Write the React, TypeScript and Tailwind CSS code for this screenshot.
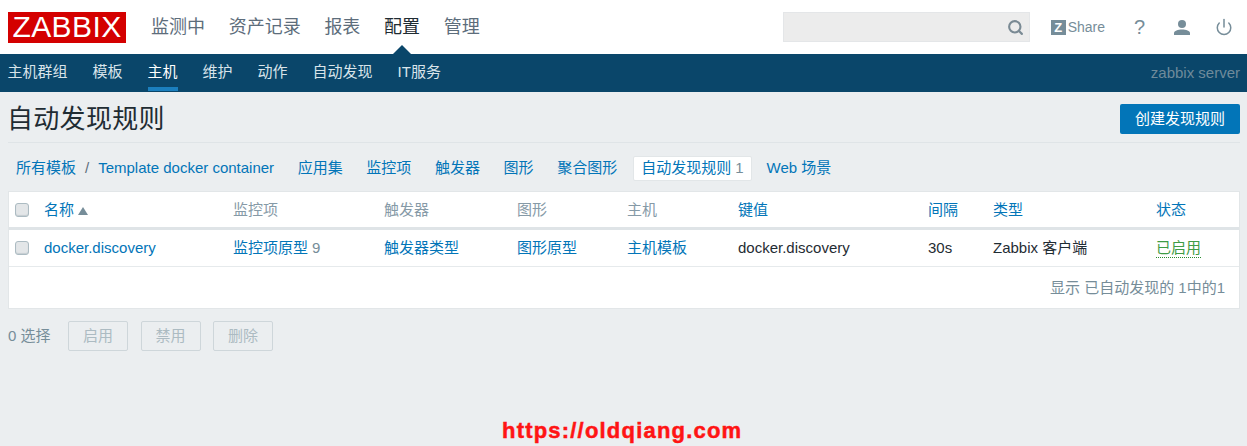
import React from "react";
import { Search, Power } from "lucide-react";

const FONT = "font-['Liberation_Sans','Noto_Sans_CJK_SC',sans-serif]";

const topMenu = ["监测中", "资产记录", "报表", "配置", "管理"];
const subMenu = ["主机群组", "模板", "主机", "维护", "动作", "自动发现", "IT服务"];
const tabs = ["应用集", "监控项", "触发器", "图形", "聚合图形"];
const COLS = "grid-cols-[29px_189px_151px_133px_110px_111px_190px_65px_163px_84px]";

const Checkbox = () => (
  <span className="block h-[14px] w-[14px] rounded-[3px] border border-[#acbbc2] bg-[#e3e6e8] shadow-[inset_0_-1px_1px_#c5cdd1]" />
);

const Header = () => (
  <header className="flex h-[54px] items-center bg-white pl-2 pr-[14px]">
    <div className="flex h-[31px] w-[118px] items-center justify-center bg-[#d40000] text-[30px] leading-none tracking-[0.4px] text-white">
      ZABBIX
    </div>
    <nav className="ml-[25px] flex gap-[23.7px] text-[18px] text-[#5d6d7b]">
      {topMenu.map((m) => (
        <a key={m} className={m === "配置" ? "relative text-[#1f2c33]" : ""}>
          {m}
          {m === "配置" && (
            <span className="absolute left-1/2 top-[31px] h-0 w-0 -translate-x-1/2 border-x-[10px] border-b-[10px] border-x-transparent border-b-[#0a466a]" />
          )}
        </a>
      ))}
    </nav>
    <div className="ml-auto flex items-center">
      <div className="flex h-[30px] w-[247px] items-center justify-end border border-[#e4e6e8] bg-[#ececec] pr-[5px]">
        <Search size={17} strokeWidth={3} className="text-[#7a8a94]" />
      </div>
      <div className="ml-[21px] flex items-center text-[14px] text-[#768d99]">
        <span className="mr-[2px] flex h-[15px] w-[15px] items-center justify-center bg-[#768d99] text-[13px] font-bold leading-none text-white">
          Z
        </span>
        Share
      </div>
      <span className="ml-[28px] w-[13px] text-center text-[20px] leading-none text-[#768d99]">?</span>
      <svg viewBox="0 0 16 15" className="ml-[28px] h-[15px] w-[16px] fill-[#768d99]">
        <circle cx="8" cy="4" r="4" />
        <path d="M0 15v-2c0-2 4-3.5 8-3.5s8 1.5 8 3.5v2z" />
      </svg>
      <Power size={18} strokeWidth={2} className="ml-[25px] text-[#768d99]" />
    </div>
  </header>
);

const SubNav = () => (
  <nav className="flex h-[38px] items-start bg-[#0a466a] pl-[7.5px] pr-[7px] text-[15px] text-[#d9e4ea]">
    <div className="flex gap-[25px]">
      {subMenu.map((m) => (
        <a
          key={m}
          className={
            m === "主机"
              ? "flex h-[37px] items-center border-b-[4px] border-[#1b7fbe] pt-[4px] text-white"
              : "flex h-[37px] items-center border-b-[4px] border-transparent pt-[4px]"
          }
        >
          {m}
        </a>
      ))}
    </div>
    <span className="ml-auto self-center text-[15px] text-[#6f8b9b]">zabbix server</span>
  </nav>
);

const TitleBar = () => (
  <div className="ml-2 mr-[7px] flex h-[51px] items-center justify-between border-b border-[#dfe4e7] pt-[4px]">
    <h1 className="-ml-[1px] mt-[1px] text-[26px] tracking-[0.3px] text-[#1f2c33]">自动发现规则</h1>
    <button className="h-[30px] w-[120px] rounded-[2px] bg-[#0275b8] text-[15px] text-white">创建发现规则</button>
  </div>
);

const Tabs = () => (
  <div className="flex h-[48px] items-center pl-4 pt-[2px] text-[15px] text-[#0275b8]">
    <a>所有模板</a>
    <span className="ml-[9px] mr-[9px] text-[#5d6d7b]">/</span>
    <a>Template docker container</a>
    <div className="ml-[23.6px] flex items-center gap-[23.6px]">
      {tabs.map((t) => (
        <a key={t}>{t}</a>
      ))}
    </div>
    <span className="ml-[16px] flex h-[25px] items-center rounded-[2px] border border-[#e2e6e8] bg-white px-[7px]">
      自动发现规则<span className="ml-[4px] text-[#768d99]">1</span>
    </span>
    <a className="ml-[15px]">Web 场景</a>
  </div>
);

const Table = () => (
  <section className="ml-2 mr-[7px] h-[118px] border border-[#e2e6e8] bg-white text-[15px]">
    <div className={`grid h-[38px] items-center border-b-[3px] border-[#dfe4e7] pl-[6px] pt-[1px] ${COLS}`}>
      <Checkbox />
      <span className="flex items-center text-[#0275b8]">
        名称
        <span className="ml-[4px] mt-[2px] h-0 w-0 border-x-[5px] border-b-[8px] border-x-transparent border-b-[#768d99]" />
      </span>
      <span className="text-[#869aa7]">监控项</span>
      <span className="text-[#869aa7]">触发器</span>
      <span className="text-[#869aa7]">图形</span>
      <span className="text-[#869aa7]">主机</span>
      <span className="text-[#0275b8]">键值</span>
      <span className="text-[#0275b8]">间隔</span>
      <span className="text-[#0275b8]">类型</span>
      <span className="text-[#0275b8]">状态</span>
    </div>
    <div className={`grid h-[37px] items-center border-b border-[#e6eaec] pl-[6px] text-[#1f2c33] ${COLS}`}>
      <Checkbox />
      <a className="text-[#0275b8]">docker.discovery</a>
      <span>
        <a className="text-[#0275b8]">监控项原型</a>
        <span className="ml-[4px] text-[#768d99]">9</span>
      </span>
      <a className="text-[#0275b8]">触发器类型</a>
      <a className="text-[#0275b8]">图形原型</a>
      <a className="text-[#0275b8]">主机模板</a>
      <span>docker.discovery</span>
      <span>30s</span>
      <span>Zabbix 客户端</span>
      <span>
        <a className="border-b border-dotted border-[#2a8a2e] pb-[1px] text-[#3f9c45]">已启用</a>
      </span>
    </div>
    <div className="flex h-[41px] items-center justify-end pr-[14px] pt-[2px] text-[#768d99]">显示 已自动发现的 1中的1</div>
  </section>
);

const Actions = () => (
  <div className="ml-2 mt-[12px] flex items-center text-[15px] text-[#768d99]">
    <span className="mr-[16px] w-[44px] whitespace-nowrap">0 选择</span>
    <div className="flex gap-[12.5px]">
      {["启用", "禁用", "删除"].map((a) => (
        <button
          key={a}
          className="h-[30px] w-[60px] rounded-[2px] border border-[#ced6da] text-[15px] text-[#acbbc2]"
        >
          {a}
        </button>
      ))}
    </div>
  </div>
);

export default function App() {
  return (
    <div className={`relative h-[446px] overflow-hidden bg-[#ebeef0] ${FONT}`}>
      <Header />
      <SubNav />
      <TitleBar />
      <Tabs />
      <Table />
      <Actions />
      <div className="absolute left-[502px] top-[418px] text-[22px] font-bold leading-[26px] tracking-[1.2px] text-[#ff1414] [-webkit-text-stroke:0.5px_#ff1414]">
        https://oldqiang.com
      </div>
    </div>
  );
}
